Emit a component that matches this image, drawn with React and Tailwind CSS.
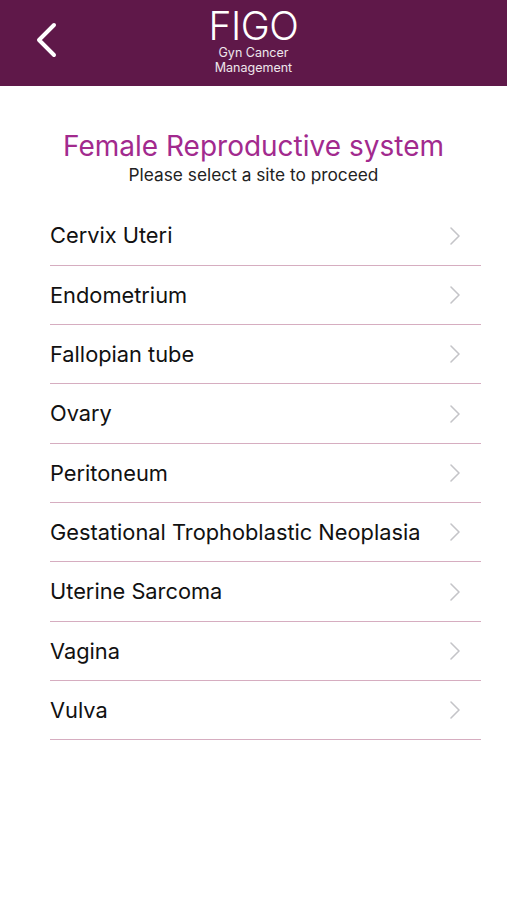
const sites = [
  'Cervix Uteri',
  'Endometrium',
  'Fallopian tube',
  'Ovary',
  'Peritoneum',
  'Gestational Trophoblastic Neoplasia',
  'Uterine Sarcoma',
  'Vagina',
  'Vulva',
];

function Chevron({ className }) {
  return (
    <svg viewBox="0 0 12 20" className={className} fill="none" stroke="currentColor" strokeLinecap="round" strokeLinejoin="round">
      <path d="M2 2l8 8-8 8" />
    </svg>
  );
}

export default function App() {
  return (
    <div className="min-h-[900px] bg-white font-['Inter',sans-serif]">
      <header className="relative flex h-[86px] flex-col items-center bg-[#5f1849] pt-[7px] text-white">
        <button className="absolute left-[34px] top-[22px] text-white">
          <svg viewBox="0 0 24 36" className="h-[36px] w-[24px]" fill="none" stroke="currentColor" strokeWidth="4" strokeLinecap="round" strokeLinejoin="round">
            <path d="M20 3L5 18l15 15" />
          </svg>
        </button>
        <div className="text-[39px] font-light leading-[38px] tracking-[-0.5px]">FIGO</div>
        <div className="text-center text-[12.5px] leading-[15px] text-white/90">
          <div>Gyn Cancer</div>
          <div>Management</div>
        </div>
      </header>

      <main className="px-[50px] pt-[42px]">
        <h1 className="text-center text-[28px] leading-[36px] text-[#a22a8e]">Female Reproductive system</h1>
        <p className="text-center text-[17.3px] leading-[22px] text-[#222]">Please select a site to proceed</p>

        <ul className="mt-[20px] w-[431px]">
          {sites.map((s, i) => (
            <li
              key={s}
              className={`flex items-center justify-between border-b border-[#d6adc0] ${i % 3 === 0 ? 'h-[60px]' : 'h-[59px]'}`}
            >
              <span className="text-[21.8px] text-[#111]">{s}</span>
              <Chevron className="mr-[20px] h-[20px] w-[12px] stroke-[1.6] text-[#c4c4c8]" />
            </li>
          ))}
        </ul>
      </main>
    </div>
  );
}
